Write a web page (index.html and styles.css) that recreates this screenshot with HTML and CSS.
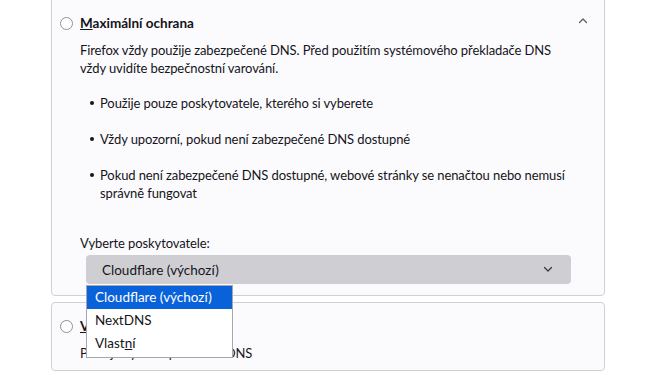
FILE: index.html
```html
<!DOCTYPE html>
<html lang="cs">
<head>
<meta charset="utf-8">
<link rel="stylesheet" href="styles.css">
</head>
<body>
<div class="page">
  <section class="card card-max">
    <div class="head">
      <span class="radio"></span>
      <span class="title"><u>M</u>aximální ochrana</span>
      <svg class="chev-up" width="10" height="7" viewBox="0 0 10 7"><path d="M1.5 5.5 L5 2 L8.5 5.5" fill="none" stroke="#5b5b66" stroke-width="1.3" stroke-linecap="round" stroke-linejoin="round"/></svg>
    </div>
    <p class="desc">Firefox vždy použije zabezpečené DNS. Před použitím systémového překladače DNS vždy uvidíte bezpečnostní varování.</p>
    <ul class="bullets">
      <li>Použije pouze poskytovatele, kterého si vyberete</li>
      <li>Vždy upozorní, pokud není zabezpečené DNS dostupné</li>
      <li>Pokud není zabezpečené DNS dostupné, webové stránky se nenačtou nebo nemusí správně fungovat</li>
    </ul>
    <div class="label">Vyberte poskytovatele:</div>
    <div class="select-wrap">
      <div class="select">
        <span>Cloudflare (výchozí)</span>
        <svg class="chev-down" width="10" height="7" viewBox="0 0 10 7"><path d="M1.5 1.5 L5 5 L8.5 1.5" fill="none" stroke="#3a3944" stroke-width="1.3" stroke-linecap="round" stroke-linejoin="round"/></svg>
      </div>
      <div class="popup">
        <div class="opt sel">Cloudflare (výchozí)</div>
        <div class="opt">NextDNS</div>
        <div class="opt">Vlast<u>n</u>í</div>
      </div>
    </div>
  </section>
  <section class="card card-off">
    <div class="head">
      <span class="radio"></span>
      <span class="title"><u>V</u>ypnuto</span>
    </div>
    <p class="desc">Použije výchozí překladač DNS</p>
  </section>
</div>
</body>
</html>
```
FILE: styles.css
```css
html, body {
  margin: 0;
  padding: 0;
  background: #ffffff;
}
body {
  font-family: Lato, "Noto Sans", sans-serif;
  font-size: 13px;
  letter-spacing: -0.1px;
  line-height: 18px;
  color: #15141a;
  overflow: hidden;
}
.page {
  margin-left: 51px;
  width: 554px;
  margin-top: -6px;
  display: flex;
  flex-direction: column;
  gap: 6px;
}
.card {
  border: 1px solid #cfcfd8;
  border-radius: 4px;
  background: #fbfbfe;
}
.card-max {
  padding: 19px 0 11px 0;
}
.card-off {
  padding: 14px 0 8px 0;
}
.head {
  display: flex;
  align-items: center;
  height: 18px;
  padding-left: 8px;
  padding-right: 16px;
}
.radio {
  width: 11px;
  height: 11px;
  border: 1.5px solid #8f8f9d;
  border-radius: 50%;
  background: #fff;
  flex: none;
}
.title {
  font-weight: 700;
  font-size: 13.5px;
  letter-spacing: 0;
  margin-left: 7px;
}
.chev-up {
  margin-left: auto;
  margin-top: -6px;
}
.desc {
  margin: 9px 39px 0 28px;
}
.bullets {
  list-style: none;
  margin: 17px 14px 0 48px;
  padding: 0;
  display: flex;
  flex-direction: column;
  gap: 18px;
}
.bullets li {
  position: relative;
}
.bullets li::before {
  content: "";
  position: absolute;
  left: -10px;
  top: 7px;
  width: 4px;
  height: 4px;
  border-radius: 50%;
  background: #15141a;
}
.label {
  margin: 32px 0 0 28px;
}
.select-wrap {
  position: relative;
  margin: 3px 0 0 34px;
  width: 485px;
  font-size: 13.5px;
  letter-spacing: 0;
}
.select {
  height: 29px;
  border-radius: 4px;
  background: #cfcfd3;
  display: flex;
  align-items: center;
  padding: 0 16px;
}
.chev-down {
  margin-left: auto;
  margin-right: 2px;
}
.popup {
  position: absolute;
  left: 0;
  top: 30px;
  width: 145px;
  background: #fff;
  border: 1px solid #a6a6ae;
  padding: 0 0 2px 0;
  z-index: 5;
}
.opt {
  height: 23px;
  line-height: 23px;
  padding-left: 8px;
  white-space: nowrap;
}
.opt.sel {
  background: #0a62da;
  color: #fff;
}
```
